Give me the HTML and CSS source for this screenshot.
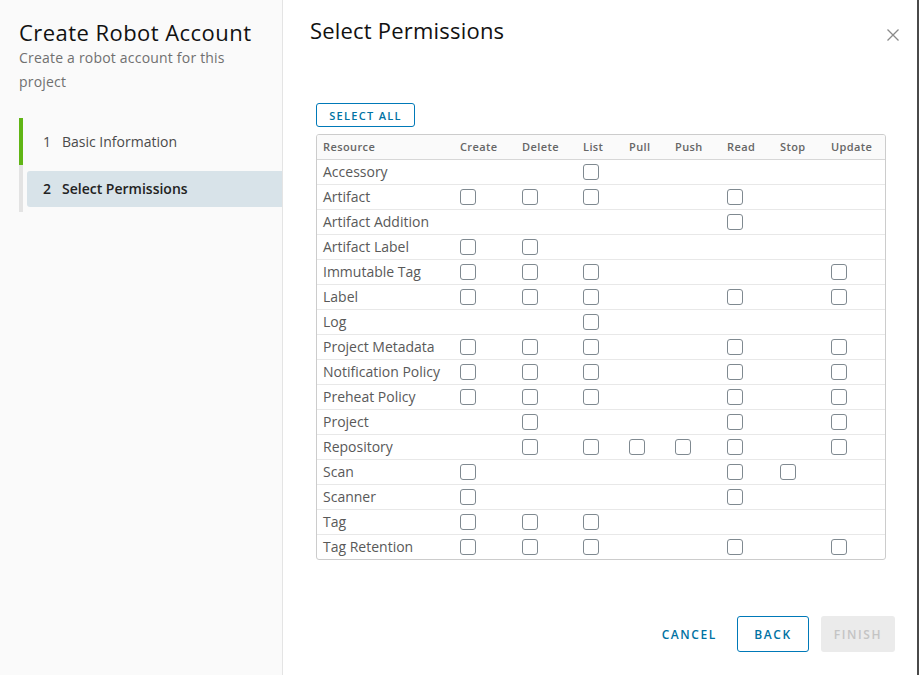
FILE: index.html
```html
<!DOCTYPE html>
<html lang="en">
<head>
<meta charset="utf-8">
<title>Create Robot Account</title>
<link rel="stylesheet" href="styles.css">
</head>
<body>
<div class="modal">
  <aside class="side">
    <h1 class="side-title">Create Robot Account</h1>
    <p class="side-desc">Create a robot account for this project</p>
    <ol class="steps">
      <li class="step done"><div class="step-inner"><span class="num">1</span><span>Basic Information</span></div></li>
      <li class="step active"><div class="step-inner"><span class="num">2</span><span>Select Permissions</span></div></li>
    </ol>
  </aside>
  <main class="content">
    <header class="content-head">
      <h2 class="content-title">Select Permissions</h2>
      <button class="close" aria-label="Close">
        <svg width="12" height="12" viewBox="0 0 12 12"><path d="M0.5 0.5 L11.5 11.5 M11.5 0.5 L0.5 11.5" stroke="#8a8a8a" stroke-width="1.3" fill="none"/></svg>
      </button>
    </header>
    <div class="body">
      <button class="btn btn-outline btn-sm">SELECT ALL</button>
      <div class="grid">
        <div class="row head">
          <div class="cell">Resource</div><div class="cell">Create</div><div class="cell">Delete</div><div class="cell">List</div><div class="cell">Pull</div><div class="cell">Push</div><div class="cell">Read</div><div class="cell">Stop</div><div class="cell">Update</div>
        </div>
        <div class="row"><div class="cell">Accessory</div><div class="cell"></div><div class="cell"></div><div class="cell"><span class="cb"></span></div><div class="cell"></div><div class="cell"></div><div class="cell"></div><div class="cell"></div><div class="cell"></div></div>
        <div class="row"><div class="cell">Artifact</div><div class="cell"><span class="cb"></span></div><div class="cell"><span class="cb"></span></div><div class="cell"><span class="cb"></span></div><div class="cell"></div><div class="cell"></div><div class="cell"><span class="cb"></span></div><div class="cell"></div><div class="cell"></div></div>
        <div class="row"><div class="cell">Artifact Addition</div><div class="cell"></div><div class="cell"></div><div class="cell"></div><div class="cell"></div><div class="cell"></div><div class="cell"><span class="cb"></span></div><div class="cell"></div><div class="cell"></div></div>
        <div class="row"><div class="cell">Artifact Label</div><div class="cell"><span class="cb"></span></div><div class="cell"><span class="cb"></span></div><div class="cell"></div><div class="cell"></div><div class="cell"></div><div class="cell"></div><div class="cell"></div><div class="cell"></div></div>
        <div class="row"><div class="cell">Immutable Tag</div><div class="cell"><span class="cb"></span></div><div class="cell"><span class="cb"></span></div><div class="cell"><span class="cb"></span></div><div class="cell"></div><div class="cell"></div><div class="cell"></div><div class="cell"></div><div class="cell"><span class="cb"></span></div></div>
        <div class="row"><div class="cell">Label</div><div class="cell"><span class="cb"></span></div><div class="cell"><span class="cb"></span></div><div class="cell"><span class="cb"></span></div><div class="cell"></div><div class="cell"></div><div class="cell"><span class="cb"></span></div><div class="cell"></div><div class="cell"><span class="cb"></span></div></div>
        <div class="row"><div class="cell">Log</div><div class="cell"></div><div class="cell"></div><div class="cell"><span class="cb"></span></div><div class="cell"></div><div class="cell"></div><div class="cell"></div><div class="cell"></div><div class="cell"></div></div>
        <div class="row"><div class="cell">Project Metadata</div><div class="cell"><span class="cb"></span></div><div class="cell"><span class="cb"></span></div><div class="cell"><span class="cb"></span></div><div class="cell"></div><div class="cell"></div><div class="cell"><span class="cb"></span></div><div class="cell"></div><div class="cell"><span class="cb"></span></div></div>
        <div class="row"><div class="cell">Notification Policy</div><div class="cell"><span class="cb"></span></div><div class="cell"><span class="cb"></span></div><div class="cell"><span class="cb"></span></div><div class="cell"></div><div class="cell"></div><div class="cell"><span class="cb"></span></div><div class="cell"></div><div class="cell"><span class="cb"></span></div></div>
        <div class="row"><div class="cell">Preheat Policy</div><div class="cell"><span class="cb"></span></div><div class="cell"><span class="cb"></span></div><div class="cell"><span class="cb"></span></div><div class="cell"></div><div class="cell"></div><div class="cell"><span class="cb"></span></div><div class="cell"></div><div class="cell"><span class="cb"></span></div></div>
        <div class="row"><div class="cell">Project</div><div class="cell"></div><div class="cell"><span class="cb"></span></div><div class="cell"></div><div class="cell"></div><div class="cell"></div><div class="cell"><span class="cb"></span></div><div class="cell"></div><div class="cell"><span class="cb"></span></div></div>
        <div class="row"><div class="cell">Repository</div><div class="cell"></div><div class="cell"><span class="cb"></span></div><div class="cell"><span class="cb"></span></div><div class="cell"><span class="cb"></span></div><div class="cell"><span class="cb"></span></div><div class="cell"><span class="cb"></span></div><div class="cell"></div><div class="cell"><span class="cb"></span></div></div>
        <div class="row"><div class="cell">Scan</div><div class="cell"><span class="cb"></span></div><div class="cell"></div><div class="cell"></div><div class="cell"></div><div class="cell"></div><div class="cell"><span class="cb"></span></div><div class="cell"><span class="cb"></span></div><div class="cell"></div></div>
        <div class="row"><div class="cell">Scanner</div><div class="cell"><span class="cb"></span></div><div class="cell"></div><div class="cell"></div><div class="cell"></div><div class="cell"></div><div class="cell"><span class="cb"></span></div><div class="cell"></div><div class="cell"></div></div>
        <div class="row"><div class="cell">Tag</div><div class="cell"><span class="cb"></span></div><div class="cell"><span class="cb"></span></div><div class="cell"><span class="cb"></span></div><div class="cell"></div><div class="cell"></div><div class="cell"></div><div class="cell"></div><div class="cell"></div></div>
        <div class="row last"><div class="cell">Tag Retention</div><div class="cell"><span class="cb"></span></div><div class="cell"><span class="cb"></span></div><div class="cell"><span class="cb"></span></div><div class="cell"></div><div class="cell"></div><div class="cell"><span class="cb"></span></div><div class="cell"></div><div class="cell"><span class="cb"></span></div></div>
      </div>
    </div>
    <footer class="footer">
      <button class="btn btn-link">CANCEL</button>
      <button class="btn btn-outline">BACK</button>
      <button class="btn btn-disabled">FINISH</button>
    </footer>
  </main>
</div>
</body>
</html>
```
FILE: styles.css
```css
* { box-sizing: border-box; }
html, body { margin: 0; padding: 0; }
body {
  width: 920px;
  height: 675px;
  overflow: hidden;
  background: #ffffff;
  font-family: "Open Sans", "Liberation Sans", Arial, sans-serif;
  color: #565656;
}
.modal {
  display: flex;
  width: 919px;
  height: 675px;
  border-right: 2px solid #4a4a4a;
}
.side {
  width: 283px;
  flex: none;
  background: #fafafa;
  border-right: 1px solid #e4e4e4;
  padding: 18px 0 0 19px;
}
.side-title {
  margin: 0;
  font-size: 22px;
  font-weight: 400;
  line-height: 28px;
  letter-spacing: 0.45px;
  color: #111;
}
.side-desc {
  margin: 0;
  width: 230px;
  font-size: 14px;
  line-height: 24px;
  letter-spacing: 0.2px;
  color: #707070;
}
.steps {
  list-style: none;
  margin: 24px 0 0 0;
  padding: 0;
}
.step {
  border-left: 4px solid #e3e3e3;
  padding: 6px 0 6px 4px;
  height: 47px;
}
.step.done { border-left-color: #60b515; }
.step-inner {
  display: flex;
  align-items: center;
  height: 36px;
  padding-left: 16px;
  padding-bottom: 1px;
  font-size: 14px;
  color: #4a4a4a;
  border-radius: 3px 0 0 3px;
}
.step .num { width: 19px; }
.step.active .step-inner {
  background: #d8e3e9;
  color: #222;
  font-weight: 600;
}
.content {
  flex: 1;
  display: flex;
  flex-direction: column;
}
.content-head {
  display: flex;
  justify-content: space-between;
  align-items: flex-start;
  padding: 16px 18px 0 27px;
  height: 103px;
}
.content-title {
  margin: 0;
  font-size: 22px;
  font-weight: 400;
  line-height: 28px;
  letter-spacing: 0.2px;
  color: #111;
}
.close {
  border: 0;
  background: none;
  padding: 0;
  margin-top: 13px;
  width: 12px;
  height: 12px;
  display: flex;
}
.body {
  padding-left: 33px;
  display: flex;
  flex-direction: column;
  align-items: flex-start;
}
.btn {
  font-family: inherit;
  font-size: 11px;
  font-weight: 600;
  letter-spacing: 1.3px;
  border-radius: 3px;
  background: none;
  cursor: pointer;
  display: flex;
  align-items: center;
  justify-content: center;
  padding: 0;
}
.btn-sm {
  height: 24px;
  width: 99px;
}
.btn-outline {
  border: 1px solid #0079b8;
  color: #0072a3;
  background: #fff;
}
.grid {
  margin-top: 7px;
  width: 570px;
  border: 1px solid #cccccc;
  border-radius: 3px;
  overflow: hidden;
}
.row {
  display: grid;
  grid-template-columns: 137px 62px 61px 46px 46px 52px 53px 51px 60px;
  height: 25px;
  border-bottom: 1px solid #e8e8e8;
}
.row.last { height: 24px; border-bottom: 0; }
.row.head {
  height: 25px;
  background: #fafafa;
  border-bottom: 1px solid #d7d7d7;
}
.cell {
  display: flex;
  align-items: center;
  padding-left: 6px;
  padding-bottom: 2px;
  font-size: 14px;
  color: #595959;
  white-space: nowrap;
}
.cell .cb { margin-top: 2px; }
.head .cell {
  font-size: 11px;
  font-weight: 600;
  color: #666;
  letter-spacing: 0.4px;
  padding-bottom: 1px;
}
.cb {
  display: block;
  width: 16px;
  height: 16px;
  border: 1px solid #7f8990;
  border-radius: 3px;
  background: #fff;
}
.footer {
  margin-top: auto;
  display: flex;
  justify-content: flex-end;
  align-items: center;
  padding: 0 22px 23px 0;
}
.footer .btn {
  height: 36px;
  font-size: 12px;
  letter-spacing: 1.6px;
}
.btn-link {
  border: 0;
  color: #0072a3;
  padding: 0 12px;
  margin-right: 8px;
}
.footer .btn-outline { width: 72px; }
.btn-disabled {
  border: 0;
  width: 74px;
  margin-left: 12px;
  background: #ebebeb;
  color: #c4c4c4;
}
```
